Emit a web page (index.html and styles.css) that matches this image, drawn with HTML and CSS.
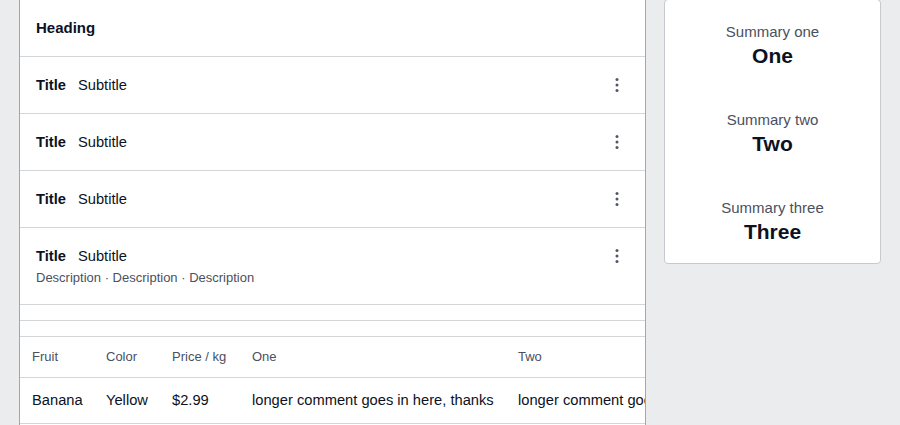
FILE: index.html
```html
<!DOCTYPE html>
<html lang="en">
<head>
<meta charset="utf-8">
<title>Dashboard</title>
<link rel="stylesheet" href="styles.css">
</head>
<body>
<div class="page">
  <main class="main">
    <section class="card list-card">
      <div class="card-heading">Heading</div>
      <div class="row">
        <div class="row-text">
          <div class="row-line"><span class="title">Title</span><span class="subtitle">Subtitle</span></div>
        </div>
        <svg class="kebab" viewBox="0 0 16 16" width="16" height="16"><circle cx="8" cy="2.6" r="1.5"/><circle cx="8" cy="8" r="1.5"/><circle cx="8" cy="13.4" r="1.5"/></svg>
      </div>
      <div class="row">
        <div class="row-text">
          <div class="row-line"><span class="title">Title</span><span class="subtitle">Subtitle</span></div>
        </div>
        <svg class="kebab" viewBox="0 0 16 16" width="16" height="16"><circle cx="8" cy="2.6" r="1.5"/><circle cx="8" cy="8" r="1.5"/><circle cx="8" cy="13.4" r="1.5"/></svg>
      </div>
      <div class="row">
        <div class="row-text">
          <div class="row-line"><span class="title">Title</span><span class="subtitle">Subtitle</span></div>
        </div>
        <svg class="kebab" viewBox="0 0 16 16" width="16" height="16"><circle cx="8" cy="2.6" r="1.5"/><circle cx="8" cy="8" r="1.5"/><circle cx="8" cy="13.4" r="1.5"/></svg>
      </div>
      <div class="row row-top">
        <div class="row-text">
          <div class="row-line"><span class="title">Title</span><span class="subtitle">Subtitle</span></div>
          <div class="desc">Description · Description · Description</div>
        </div>
        <svg class="kebab" viewBox="0 0 16 16" width="16" height="16"><circle cx="8" cy="2.6" r="1.5"/><circle cx="8" cy="8" r="1.5"/><circle cx="8" cy="13.4" r="1.5"/></svg>
      </div>
    </section>
    <hr class="divider">
    <section class="card table-card">
      <table class="table">
        <colgroup>
          <col class="c-fruit"><col class="c-color"><col class="c-price"><col class="c-one"><col class="c-two">
        </colgroup>
        <thead>
          <tr><th>Fruit</th><th>Color</th><th>Price / kg</th><th>One</th><th>Two</th></tr>
        </thead>
        <tbody>
          <tr><td>Banana</td><td>Yellow</td><td>$2.99</td><td>longer comment goes in here, thanks</td><td>longer comment goes in here, thanks</td></tr>
        </tbody>
      </table>
    </section>
  </main>
  <aside class="side">
    <section class="card summary-card">
      <div class="stat"><div class="stat-label">Summary one</div><div class="stat-value">One</div></div>
      <div class="stat"><div class="stat-label">Summary two</div><div class="stat-value">Two</div></div>
      <div class="stat"><div class="stat-label">Summary three</div><div class="stat-value">Three</div></div>
    </section>
  </aside>
</div>
</body>
</html>
```
FILE: styles.css
```css
* { box-sizing: border-box; }
html, body { margin: 0; padding: 0; }
body {
  background: #ebecee;
  font-family: "Liberation Sans", Arial, sans-serif;
  color: #0c1222;
  overflow: hidden;
  height: 425px;
}
.page {
  display: flex;
  align-items: flex-start;
  gap: 18px;
  padding: 0 19px;
  margin-top: -1px;
}
.main {
  flex: 0 0 627px;
  background: #fff;
  border-left: 1px solid #a3a7ad;
  border-right: 1px solid #a3a7ad;
  min-height: 440px;
  overflow: hidden;
}
.card {
  background: #fff;
  border-top: 1px solid #d3d5d9;
  border-bottom: 1px solid #d3d5d9;
}
.card-heading {
  font-size: 15px;
  font-weight: 700;
  line-height: 20px;
  padding: 18px 16px;
  border-bottom: 1px solid #d3d5d9;
}
.row {
  display: flex;
  align-items: center;
  padding: 18px 20px 18px 16px;
  border-bottom: 1px solid #d3d5d9;
}
.row:last-child { border-bottom: none; }
.row-top { align-items: flex-start; padding-bottom: 17px; }
.row-text { flex: 1; }
.row-line {
  display: flex;
  gap: 12px;
  font-size: 14.7px;
  line-height: 20px;
}
.title { font-weight: 700; }
.subtitle { font-weight: 400; }
.desc {
  font-size: 13px;
  line-height: 18px;
  margin-top: 3px;
  color: #4b5060;
}
.kebab { fill: #505665; flex: none; }
.row-top .kebab { margin-top: 2px; }
.divider {
  border: none;
  border-top: 1px solid #d3d5d9;
  margin: 15px 0 15px;
  height: 0;
}
.table-card { overflow: hidden; }
.table {
  border-collapse: collapse;
  white-space: nowrap;
  table-layout: fixed;
  width: 786px;
}
.c-fruit { width: 74px; }
.c-color { width: 66px; }
.c-price { width: 80px; }
.c-one { width: 266px; }
.c-two { width: 300px; }
.table th {
  text-align: left;
  font-weight: 400;
  font-size: 13px;
  color: #4b5060;
  height: 40px;
  padding: 0 10px 0 12px;
  border-bottom: 1px solid #d3d5d9;
}
.table td {
  font-size: 14.7px;
  height: 46px;
  padding: 0 10px 0 12px;
  overflow: hidden;
}
.side { flex: 0 0 217px; }
.summary-card {
  border: 1px solid #c6c9ce;
  border-radius: 4px;
  padding: 22px 12px 17px;
  display: flex;
  flex-direction: column;
  gap: 40px;
  text-align: center;
}
.stat-label {
  font-size: 15px;
  line-height: 20px;
  color: #4b5060;
}
.stat-value {
  font-size: 21px;
  font-weight: 700;
  line-height: 28px;
}
```
